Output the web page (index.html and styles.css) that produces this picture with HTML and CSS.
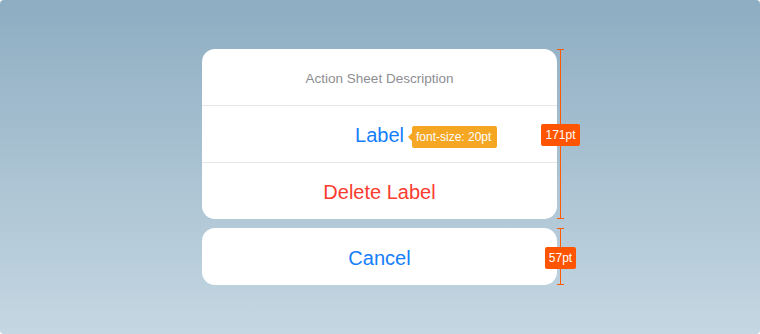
FILE: index.html
```html
<!DOCTYPE html>
<html>
<head>
<meta charset="utf-8">
<link rel="stylesheet" href="styles.css">
</head>
<body>
<div class="stage">
  <div class="sheet">
    <div class="group card">
      <div class="row desc">Action Sheet Description</div>
      <div class="row action blue"><span class="label">Label<span class="tip">font-size: 20pt</span></span></div>
      <div class="row action red last">Delete Label</div>
      <div class="measure"><span class="line"></span><span class="badge">171pt</span></div>
    </div>
    <div class="group card">
      <div class="row action blue cancel">Cancel</div>
      <div class="measure"><span class="line"></span><span class="badge">57pt</span></div>
    </div>
  </div>
</div>
</body>
</html>
```
FILE: styles.css
```css
html, body {
  margin: 0;
  padding: 0;
  background: #ffffff;
}
.stage {
  width: 760px;
  height: 334px;
  box-sizing: border-box;
  border-radius: 4px;
  background: linear-gradient(180deg, #8eadc2 0%, #c5d7e2 100%);
  padding: 49px 0 0 202px;
  font-family: "Liberation Sans", Arial, sans-serif;
}
.sheet {
  width: 355px;
  display: flex;
  flex-direction: column;
  gap: 9px;
}
.group {
  position: relative;
}
.card {
  background: #ffffff;
  border-radius: 13px;
}
.row {
  height: 57px;
  box-sizing: border-box;
  display: flex;
  align-items: center;
  justify-content: center;
  border-bottom: 1px solid #e6e6e8;
}
.row.last {
  height: 56px;
  border-bottom: none;
}
.row.cancel {
  border-bottom: none;
}
.desc {
  font-size: 13.5px;
  color: #8e8e93;
  padding-top: 2px;
}
.action {
  font-size: 20px;
  padding-top: 3px;
}
.blue { color: #157efb; }
.red { color: #fb3b30; }
.label {
  position: relative;
}
.tip {
  position: absolute;
  left: calc(100% + 8px);
  top: 50%;
  transform: translateY(-50%);
  margin-top: 1px;
  background: #f5a623;
  color: #ffffff;
  font-size: 12px;
  line-height: 22px;
  height: 22px;
  padding: 0 6px 0 4px;
  border-radius: 2px;
  white-space: nowrap;
}
.tip::before {
  content: "";
  position: absolute;
  left: -4px;
  top: 50%;
  margin-top: -4px;
  border-top: 4px solid transparent;
  border-bottom: 4px solid transparent;
  border-right: 4px solid #f5a623;
}
.measure {
  position: absolute;
  top: 0;
  bottom: 0;
  left: 100%;
  width: 7px;
  border-top: 1px solid #ff5a00;
  border-bottom: 1px solid #ff5a00;
  box-sizing: border-box;
  display: flex;
  align-items: center;
  justify-content: center;
}
.line {
  position: absolute;
  top: 0;
  bottom: 0;
  left: 3px;
  width: 1px;
  background: #ff5a00;
}
.badge {
  position: relative;
  background: #ff5500;
  color: #ffffff;
  font-size: 12px;
  line-height: 22px;
  height: 22px;
  margin-top: 2px;
  padding: 0 4px;
  border-radius: 2px;
  white-space: nowrap;
}
```
